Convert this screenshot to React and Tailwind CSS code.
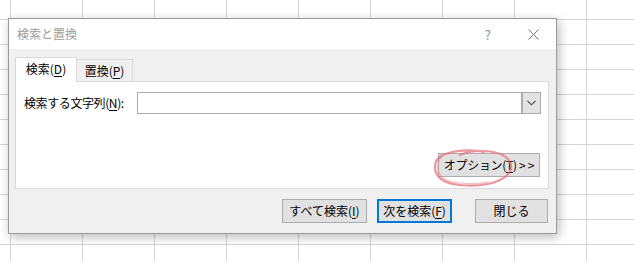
import React from "react";

const font = { fontFamily: '"Noto Sans CJK JP", "Noto Sans", sans-serif' };

function U({ children }) {
  return <span className="underline underline-offset-[2px] decoration-1">{children}</span>;
}

export default function App() {
  return (
    <div
      className="w-[634px] h-[261px] overflow-hidden bg-white bg-[linear-gradient(to_right,#d6d6d6_1px,transparent_1px),linear-gradient(to_bottom,#d6d6d6_1px,transparent_1px)] bg-[size:72px_25px] bg-[position:10px_19px] pt-[18px] pl-[8px] text-[12px] leading-none text-black"
      style={font}
    >
      <div className="w-[549px] h-[216px] border border-[#9a9a9a] bg-[#f0f0f0] shadow-[2px_3px_10px_rgba(0,0,0,0.28)] flex flex-col">
        {/* title bar */}
        <div className="h-[30px] bg-white flex items-center pl-[8px] pr-[17px]">
          <span className="text-[#9c9c9c] text-[12px]">検索と置換</span>
          <span className="ml-auto text-[#8a8a8a] text-[13px] mr-[37px]">?</span>
          <svg width="11" height="11" viewBox="0 0 11 11" className="block">
            <path d="M0.5 0.5 L10.5 10.5 M10.5 0.5 L0.5 10.5" stroke="#7a7a7a" strokeWidth="1" fill="none" />
          </svg>
        </div>
        {/* body */}
        <div className="flex-1 flex flex-col pt-[8px] pl-[6px] pr-[7px]">
          {/* tabs */}
          <div className="flex items-end h-[24px]">
            <div className="relative z-10 w-[62px] h-[25px] -mb-px bg-white border border-b-0 border-[#d9d9d9] flex items-center justify-center pb-[2px]">
              <span>検索(<U>D</U>)</span>
            </div>
            <div className="w-[56px] h-[22px] bg-[#f0f0f0] border border-l-0 border-b-0 border-[#d9d9d9] flex items-center justify-center">
              <span>置換(<U>P</U>)</span>
            </div>
          </div>
          {/* panel */}
          <div className="h-[108px] bg-white border border-[#d9d9d9] flex flex-col pl-[8px] pr-[7px] pt-[10px]">
            <div className="flex items-center h-[22px]">
              <span className="w-[113px] shrink-0 tracking-[-0.4px]">
                検索する文字列(<U>N</U>):
              </span>
              <div className="flex-1 h-[22px] border border-[#ababab] flex">
                <div className="flex-1" />
                <div className="w-[18px] h-[20px] bg-[#e3e3e3] border-l border-[#ababab] outline outline-1 outline-[#ababab] flex items-center justify-center">
                  <svg width="9" height="6" viewBox="0 0 9 6">
                    <path d="M0.5 0.8 L4.5 4.8 L8.5 0.8" stroke="#444" strokeWidth="1.1" fill="none" />
                  </svg>
                </div>
              </div>
            </div>
            <div className="flex justify-end mt-[39px] pr-px">
              <div className="relative">
                <div className="w-[102px] h-[24px] bg-[#e1e1e1] border border-[#adadad] flex items-center justify-center">
                  <span className="tracking-[-0.3px]">
                    オプション(<U>T</U>) &gt; &gt;
                  </span>
                </div>
                <svg
                  className="absolute left-[-6px] top-[-5px] pointer-events-none"
                  width="82"
                  height="40"
                  viewBox="0 0 82 40"
                >
                  <path
                    d="M52 4 C40 1, 20 2, 9 8 C1 13, 1 25, 9 31 C18 38, 40 39, 56 36 C70 33, 80 26, 79 18 C78 8, 66 3, 50 3 C40 3, 32 5, 28 7"
                    stroke="rgba(228,105,120,0.7)"
                    strokeWidth="2.2"
                    fill="none"
                    strokeLinecap="round"
                  />
                  <path
                    d="M10 9 C4 14, 4 24, 11 30 C20 36, 42 37, 57 34"
                    stroke="rgba(228,105,120,0.4)"
                    strokeWidth="1.5"
                    fill="none"
                  />
                </svg>
              </div>
            </div>
          </div>
          {/* bottom buttons */}
          <div className="flex justify-end mt-[10px] pr-px">
            <div className="w-[85px] h-[24px] bg-[#e1e1e1] border border-[#adadad] flex items-center justify-center">
              <span>
                すべて検索(<U>I</U>)
              </span>
            </div>
            <div className="ml-[10px] w-[75px] h-[24px] bg-[#e1e1e1] border-2 border-[#0078d7] flex items-center justify-center">
              <span>
                次を検索(<U>F</U>)
              </span>
            </div>
            <div className="ml-[23px] w-[73px] h-[24px] bg-[#e1e1e1] border border-[#adadad] flex items-center justify-center">
              <span>閉じる</span>
            </div>
          </div>
        </div>
      </div>
    </div>
  );
}
